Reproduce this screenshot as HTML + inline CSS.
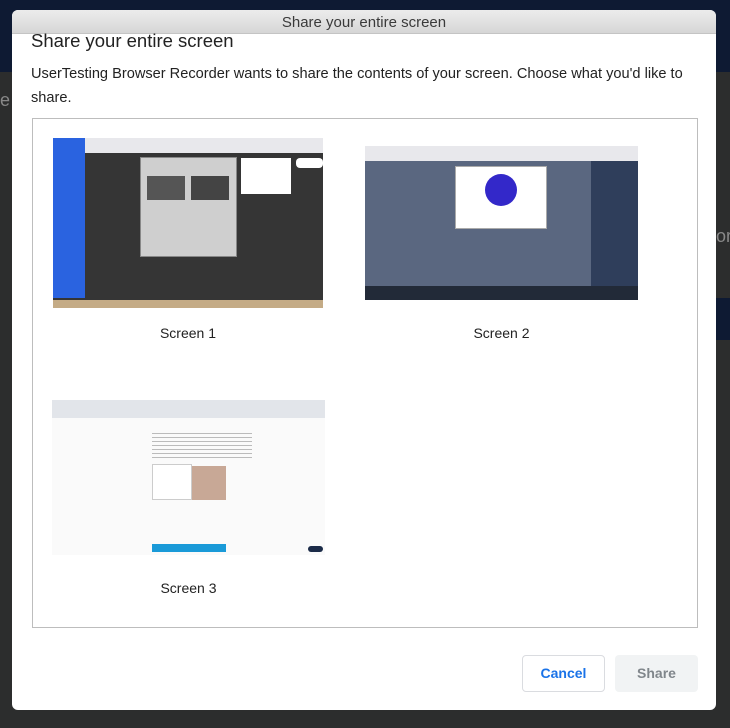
<!DOCTYPE html>
<html><head><style>
*{margin:0;padding:0;box-sizing:border-box}
body{width:730px;height:728px;overflow:hidden;background:#2b2c2c;font-family:"Liberation Sans",sans-serif;position:relative}
.a{position:absolute}
</style></head><body>
<div class="a" style="left:0;top:0;width:730px;height:72px;background:#0e1a33"></div>
<div class="a" style="left:0;top:72px;width:730px;height:656px;background:#2c2d2d"></div>
<div class="a" style="left:0;top:90px;font-size:18px;color:#888">e</div>
<div class="a" style="left:716px;top:226px;font-size:18px;color:#888">or</div>
<div class="a" style="left:716px;top:298px;width:14px;height:42px;background:#0e1a33"></div>
<div class="a" style="left:12px;top:10px;width:704px;height:700px;background:#fff;border-radius:6px;overflow:hidden">
 <div class="a" style="left:0;top:0;width:704px;height:24px;background:linear-gradient(#ececec,#d6d6d6);border-bottom:1px solid #c4c4c4;text-align:center;font-size:15px;line-height:26px;color:#3a3a3a">Share your entire screen</div>
 <div class="a" style="left:19px;top:20px;font-size:18.5px;color:#222">Share your entire screen</div>
 <div class="a" style="left:19px;top:52px;width:680px;font-size:14.6px;line-height:24px;color:#222">UserTesting Browser Recorder wants to share the contents of your screen. Choose what you'd like to share.</div>
 <div class="a" style="left:20px;top:108px;width:666px;height:510px;border:1px solid #bdbdbd"></div>
 <!-- Screen 1 -->
 <div class="a" style="left:41px;top:128px;width:270px;height:170px;background:#353535">
  <div class="a" style="left:0;top:0;width:270px;height:15px;background:#e8e8ec"></div>
  <div class="a" style="left:0;top:0;width:32px;height:160px;background:#2a63e0"></div>
  <div class="a" style="left:87px;top:19px;width:97px;height:100px;background:#cfcfcf;border:1px solid #888"></div>
  <div class="a" style="left:94px;top:38px;width:38px;height:24px;background:#555"></div>
  <div class="a" style="left:138px;top:38px;width:38px;height:24px;background:#444"></div>
  <div class="a" style="left:188px;top:20px;width:50px;height:36px;background:#fff"></div>
  <div class="a" style="left:243px;top:20px;width:27px;height:10px;background:#fff;border-radius:4px"></div>
  <div class="a" style="left:0;top:162px;width:270px;height:8px;background:#c4ab86"></div>
 </div>
 <div class="a" style="left:41px;top:315px;width:270px;text-align:center;font-size:14px;color:#222">Screen 1</div>
 <!-- Screen 2 -->
 <div class="a" style="left:353px;top:136px;width:273px;height:154px;background:#3b4d6e">
  <div class="a" style="left:0;top:0;width:273px;height:15px;background:#e8e8ec"></div>
  <div class="a" style="left:0;top:15px;width:226px;height:125px;background:#5a6780"></div>
  <div class="a" style="left:226px;top:15px;width:47px;height:125px;background:#2f3e5b"></div>
  <div class="a" style="left:90px;top:20px;width:92px;height:63px;background:#fff;border:1px solid #aaa"></div>
  <div class="a" style="left:120px;top:28px;width:32px;height:32px;border-radius:50%;background:#3328c9"></div>
  <div class="a" style="left:0;top:140px;width:273px;height:14px;background:#222a38"></div>
 </div>
 <div class="a" style="left:353px;top:315px;width:273px;text-align:center;font-size:14px;color:#222">Screen 2</div>
 <!-- Screen 3 -->
 <div class="a" style="left:40px;top:390px;width:273px;height:155px;background:#fafafa">
  <div class="a" style="left:0;top:0;width:273px;height:18px;background:#e2e5ea"></div>
  <div class="a" style="left:100px;top:30px;width:100px;height:30px;background:repeating-linear-gradient(#fafafa 0 3px,#bbb 3px 4px)"></div>
  <div class="a" style="left:100px;top:66px;width:74px;height:34px;background:#c8a896"></div>
  <div class="a" style="left:100px;top:64px;width:40px;height:36px;background:#fff;border:1px solid #ccc"></div>
  <div class="a" style="left:100px;top:144px;width:74px;height:8px;background:#1a9ad8"></div>
  <div class="a" style="left:256px;top:146px;width:15px;height:6px;background:#1b2b48;border-radius:3px"></div>
 </div>
 <div class="a" style="left:40px;top:570px;width:273px;text-align:center;font-size:14px;color:#222">Screen 3</div>
 <div class="a" style="left:510px;top:645px;width:83px;height:37px;border:1px solid #dadce0;border-radius:4px;text-align:center;line-height:35px;font-size:14px;font-weight:bold;color:#1a73e8">Cancel</div>
 <div class="a" style="left:603px;top:645px;width:83px;height:37px;background:#f1f3f4;border-radius:4px;text-align:center;line-height:37px;font-size:14px;font-weight:bold;color:#80868b">Share</div>
</div>
</body></html>
